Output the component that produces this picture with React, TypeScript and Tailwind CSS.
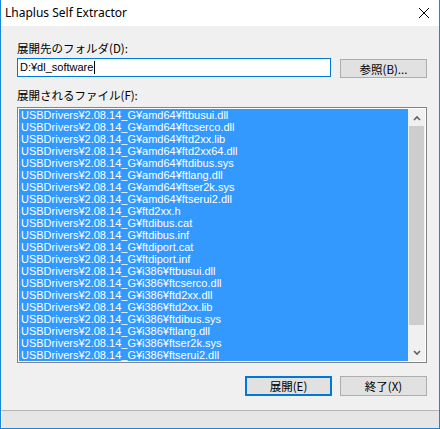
import React from "react";

const files = [
  "USBDrivers¥2.08.14_G¥amd64¥ftbusui.dll",
  "USBDrivers¥2.08.14_G¥amd64¥ftcserco.dll",
  "USBDrivers¥2.08.14_G¥amd64¥ftd2xx.lib",
  "USBDrivers¥2.08.14_G¥amd64¥ftd2xx64.dll",
  "USBDrivers¥2.08.14_G¥amd64¥ftdibus.sys",
  "USBDrivers¥2.08.14_G¥amd64¥ftlang.dll",
  "USBDrivers¥2.08.14_G¥amd64¥ftser2k.sys",
  "USBDrivers¥2.08.14_G¥amd64¥ftserui2.dll",
  "USBDrivers¥2.08.14_G¥ftd2xx.h",
  "USBDrivers¥2.08.14_G¥ftdibus.cat",
  "USBDrivers¥2.08.14_G¥ftdibus.inf",
  "USBDrivers¥2.08.14_G¥ftdiport.cat",
  "USBDrivers¥2.08.14_G¥ftdiport.inf",
  "USBDrivers¥2.08.14_G¥i386¥ftbusui.dll",
  "USBDrivers¥2.08.14_G¥i386¥ftcserco.dll",
  "USBDrivers¥2.08.14_G¥i386¥ftd2xx.dll",
  "USBDrivers¥2.08.14_G¥i386¥ftd2xx.lib",
  "USBDrivers¥2.08.14_G¥i386¥ftdibus.sys",
  "USBDrivers¥2.08.14_G¥i386¥ftlang.dll",
  "USBDrivers¥2.08.14_G¥i386¥ftser2k.sys",
  "USBDrivers¥2.08.14_G¥i386¥ftserui2.dll",
];

const jp = "font-['Noto_Sans_CJK_JP',sans-serif]";

export default function App() {
  return (
    <div className="w-[440px] h-[429px] flex flex-col border-x border-b border-[#1a86d8] bg-[#f0f0f0] text-black overflow-hidden">
      {/* title bar */}
      <div className="h-[26px] bg-white flex items-center justify-between shrink-0">
        <span className="pl-[4px] text-[12px] leading-[14px] font-['Noto_Sans',sans-serif] text-black">
          Lhaplus Self Extractor
        </span>
        <svg width="12" height="12" viewBox="0 0 12 12" className="mr-[9px]">
          <path d="M1 1 L11 11 M11 1 L1 11" stroke="#000" strokeWidth="1" fill="none" />
        </svg>
      </div>

      {/* body */}
      <div className={`flex-1 flex flex-col pl-[16px] pr-[12px] ${jp}`}>
        <div className="mt-[16px] text-[11.5px] leading-[13px]">展開先のフォルダ(D):</div>
        <div className="mt-[3px] flex items-start">
          <div className="w-[314px] h-[19px] bg-white border border-[#0078d7] flex items-center pl-[2px]">
            <span className="font-['Liberation_Sans',sans-serif] text-[11px] leading-[13px]">D:¥dl_software</span>
            <span className="w-px h-[13px] bg-black ml-px" />
          </div>
          <button className="ml-[9px] mt-[1px] w-[87px] h-[19px] bg-[#e1e1e1] border border-[#adadad] text-[11.5px] leading-[14px] flex items-center justify-center">
            参照(B)...
          </button>
        </div>
        <div className="mt-[11px] text-[11.5px] leading-[13px]">展開されるファイル(F):</div>
        <div className="mt-[5px] w-[410px] h-[256px] border border-[#828282] bg-white p-px flex">
          <div className="flex-1 bg-[#3399ff] flex flex-col overflow-hidden">
            {files.map((f) => (
              <div
                key={f}
                className="h-[12px] leading-[12px] text-[11px] text-white whitespace-nowrap pl-[2px] font-['Liberation_Sans',sans-serif]"
              >
                {f}
              </div>
            ))}
          </div>
          <div className="w-[17px] bg-[#f0f0f0] flex flex-col">
            <div className="h-[17px] flex items-center justify-center">
              <svg width="8" height="6" viewBox="0 0 8 6">
                <path d="M1 5 L4 2 L7 5" stroke="#606060" strokeWidth="1.6" fill="none" />
              </svg>
            </div>
            <div className="flex-1 flex flex-col px-px">
              <div className="h-[199px] bg-[#cdcdcd]" />
            </div>
            <div className="h-[17px] flex items-center justify-center">
              <svg width="8" height="6" viewBox="0 0 8 6">
                <path d="M1 1 L4 4 L7 1" stroke="#606060" strokeWidth="1.6" fill="none" />
              </svg>
            </div>
          </div>
        </div>
        <div className="mt-[13px] flex justify-end w-[410px] gap-[8px]">
          <button className="w-[87px] h-[20px] bg-[#e1e1e1] border-2 border-[#0078d7] text-[11.5px] leading-[14px] flex items-center justify-center">
            展開(E)
          </button>
          <button className="w-[87px] h-[20px] bg-[#e1e1e1] border border-[#adadad] text-[11.5px] leading-[14px] flex items-center justify-center">
            終了(X)
          </button>
        </div>
      </div>

      {/* status bar */}
      <div className="h-[18px] shrink-0 border-t border-[#b4b4b4] bg-[#e6e6e6] border-l border-l-white" />
    </div>
  );
}
